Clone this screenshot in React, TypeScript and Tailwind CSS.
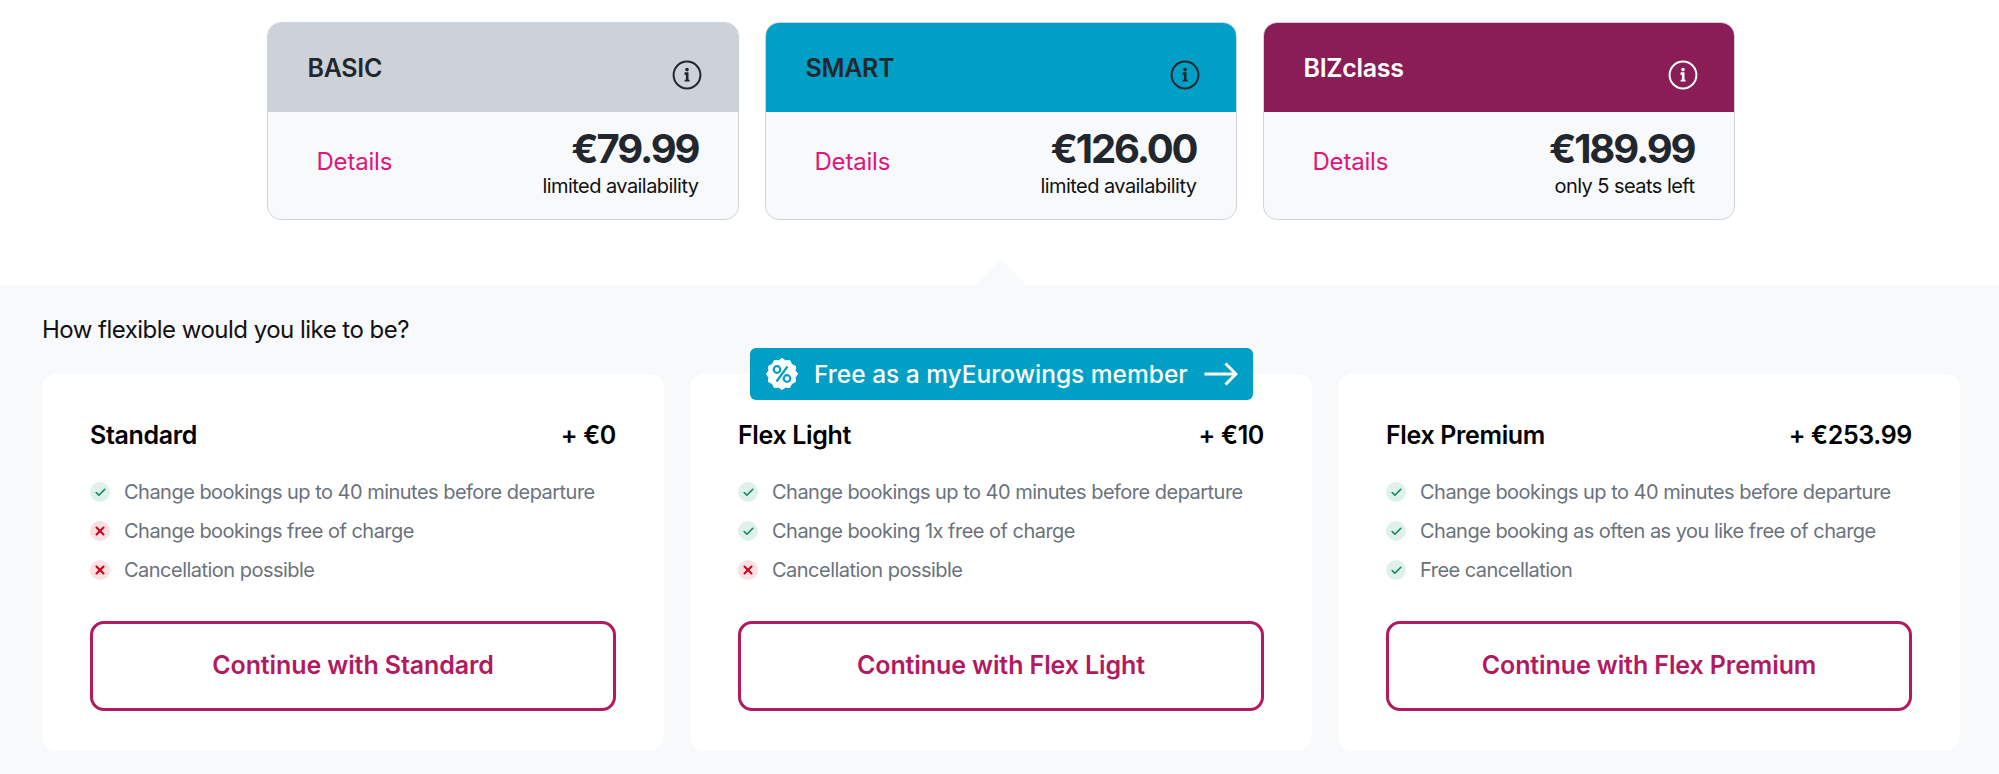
import { Check, X } from "lucide-react";

const FARES = [
  { name: "BASIC", price: "€79.99", note: "limited availability", head: "bg-[#cdd2d9] text-[#22272e]", icon: "#22272e" },
  { name: "SMART", price: "€126.00", note: "limited availability", head: "bg-[#00a0c6] text-[#22272e]", icon: "#22272e" },
  { name: "BIZclass", price: "€189.99", note: "only 5 seats left", head: "bg-[#8a1c56] text-white", icon: "#ffffff" },
];

const PLANS = [
  {
    name: "Standard",
    price: "+ €0",
    items: [
      { ok: true, text: "Change bookings up to 40 minutes before departure" },
      { ok: false, text: "Change bookings free of charge" },
      { ok: false, text: "Cancellation possible" },
    ],
  },
  {
    name: "Flex Light",
    price: "+ €10",
    badge: true,
    items: [
      { ok: true, text: "Change bookings up to 40 minutes before departure" },
      { ok: true, text: "Change booking 1x free of charge" },
      { ok: false, text: "Cancellation possible" },
    ],
  },
  {
    name: "Flex Premium",
    price: "+ €253.99",
    items: [
      { ok: true, text: "Change bookings up to 40 minutes before departure" },
      { ok: true, text: "Change booking as often as you like free of charge" },
      { ok: true, text: "Free cancellation" },
    ],
  },
];

function InfoIcon({ color }: { color: string }) {
  return (
    <svg width="30" height="30" viewBox="0 0 30 30" fill="none">
      <circle cx="15" cy="15" r="13.4" stroke={color} strokeWidth="2" />
      <circle cx="15" cy="9.6" r="1.8" fill={color} />
      <path d="M12.6 13.6H15.2V21" stroke={color} strokeWidth="2.6" />
      <path d="M12.6 20.6H17.6" stroke={color} strokeWidth="1.8" />
    </svg>
  );
}

function PercentBadge() {
  const pts: string[] = [];
  for (let i = 0; i < 24; i++) {
    const r = i % 2 === 0 ? 15.6 : 13.6;
    const a = (i / 24) * Math.PI * 2;
    pts.push(`${16 + r * Math.cos(a)},${16 + r * Math.sin(a)}`);
  }
  return (
    <svg width="32" height="32" viewBox="0 0 32 32">
      <polygon points={pts.join(" ")} fill="#fff" stroke="#fff" strokeWidth="1" strokeLinejoin="round" />
      <circle cx="11" cy="11.5" r="3.3" fill="none" stroke="#00a0c6" strokeWidth="2.2" />
      <circle cx="21" cy="20.5" r="3.3" fill="none" stroke="#00a0c6" strokeWidth="2.2" />
      <path d="M21.5 8.5L10.5 23.5" stroke="#00a0c6" strokeWidth="2.2" />
    </svg>
  );
}

function LongArrow() {
  return (
    <svg width="34" height="24" viewBox="0 0 34 24" fill="none" stroke="#fff" strokeWidth="3">
      <path d="M0.5 12H32" />
      <path d="M21.5 1.5L32 12L21.5 22.5" />
    </svg>
  );
}

function Mark({ ok }: { ok: boolean }) {
  return (
    <span
      className={`flex h-[20px] w-[20px] shrink-0 items-center justify-center rounded-full ${
        ok ? "bg-[#dff1ea] text-[#0a8a5a]" : "bg-[#f8dfe2] text-[#d0021b]"
      }`}
    >
      {ok ? <Check size={13} strokeWidth={3} /> : <X size={14} strokeWidth={3.5} />}
    </span>
  );
}

export default function App() {
  return (
    <div className="relative h-[774px] w-full overflow-hidden bg-white font-['Inter',sans-serif]">
      <div className="flex justify-center gap-[26px] pl-[2px] pt-[22px]">
        {FARES.map((f) => (
          <div key={f.name} className="h-[198px] w-[472px] overflow-hidden rounded-[14px] border-[1.5px] border-[#cfd4da] bg-[#f8f9fb]">
            <div className={`flex h-[89px] items-start justify-between pl-[40px] pr-[36px] ${f.head}`}>
              <span className="mt-[29px] text-[25px] font-semibold leading-[32px] tracking-[-0.3px]">{f.name}</span>
              <span className="mt-[37px]">
                <InfoIcon color={f.icon} />
              </span>
            </div>
            <div className="flex items-start justify-between pl-[49px] pr-[39px]">
              <span className="mt-[34px] text-[24px] leading-[32px] tracking-[-0.2px] text-[#e0157a]">Details</span>
              <div className="mt-[13px] text-right text-[#22272e]">
                <div className="text-[40px] font-bold leading-[48px] tracking-[-2.1px]">{f.price}</div>
                <div className="text-[20px] leading-[26px] tracking-[-0.55px] text-[#111]">{f.note}</div>
              </div>
            </div>
          </div>
        ))}
      </div>

      <div className="relative mt-[65px] h-[489px] bg-[#f8f9fb] pl-[42px] pr-[39px] pt-[28px]">
        <div className="absolute left-[983px] top-[-18px] h-[36px] w-[36px] origin-center rotate-45 bg-[#f8f9fb]" />
        <h2 className="relative text-[24px] font-normal leading-[34px] tracking-[-0.52px] text-[#111]">How flexible would you like to be?</h2>
        <div className="relative mt-[27px] grid grid-cols-3 gap-[26px]">
          {PLANS.map((p) => (
            <div key={p.name} className="relative h-[377px] rounded-[14px] bg-white px-[48px] pt-[45px]">
              {p.badge && (
                <div className="absolute left-[60px] top-[-26px] flex h-[52px] w-[503px] items-center rounded-[6px] bg-[#00a0c6] pl-[16px] text-white">
                  <PercentBadge />
                  <span className="ml-[16px] mt-[1px] text-[24.5px] font-medium leading-none">Free as a myEurowings member</span>
                  <span className="ml-[16px]">
                    <LongArrow />
                  </span>
                </div>
              )}
              <div className="flex items-center justify-between text-[25px] font-semibold leading-[32px] tracking-[-0.35px] text-black">
                <span>{p.name}</span>
                <span>{p.price}</span>
              </div>
              <ul className="mt-[27px] flex flex-col gap-[11px]">
                {p.items.map((it) => (
                  <li key={it.text} className="flex h-[28px] items-center gap-[14px] text-[20px] tracking-[-0.52px] text-[#6b727c]">
                    <Mark ok={it.ok} />
                    <span>{it.text}</span>
                  </li>
                ))}
              </ul>
              <button className="mt-[37px] flex h-[90px] w-full items-center justify-center rounded-[14px] border-[3px] border-[#b3195f] bg-white text-[25px] font-semibold tracking-[-0.1px] text-[#b3195f]">
                Continue with {p.name}
              </button>
            </div>
          ))}
        </div>
      </div>
    </div>
  );
}
